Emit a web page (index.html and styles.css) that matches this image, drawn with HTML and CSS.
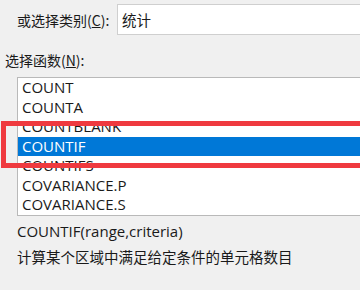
FILE: index.html
```html
<!DOCTYPE html>
<html lang="zh-CN">
<head>
  <meta charset="UTF-8" />
  <meta name="viewport" content="width=device-width, initial-scale=1.0"/>
  <title>插入函数</title>
  <link rel="stylesheet" href="styles.css">
</head>
<body>
  <div class="dialog">
    <div class="category-row">
      <label class="category-label">或选择类别(<u>C</u>):</label>
      <div class="combo">统计</div>
    </div>

    <div class="func-label">选择函数(<u>N</u>):</div>

    <ul class="func-list">
      <li>COUNT</li>
      <li>COUNTA</li>
      <li>COUNTBLANK</li>
      <li class="selected">COUNTIF</li>
      <li>COUNTIFS</li>
      <li>COVARIANCE.P</li>
      <li>COVARIANCE.S</li>
    </ul>

    <div class="syntax">COUNTIF(range,criteria)</div>
    <div class="desc">计算某个区域中满足给定条件的单元格数目</div>

    <div class="highlight-box"></div>
  </div>
</body>
</html>
```

FILE: styles.css
```css
* {
  box-sizing: border-box;
}

html, body {
  margin: 0;
  height: 100%;
  overflow: hidden;
}

body {
  background: #f0f0f0;
  font-family: "Open Sans", "Noto Sans CJK SC", sans-serif;
  font-size: 15px;
  color: #1a1a1a;
}

.dialog {
  position: relative;
  padding-top: 4px;
  width: 360px;
  height: 290px;
  overflow: hidden;
}

.category-row {
  display: flex;
  align-items: center;
  height: 31px;
}

.category-label {
  flex: none;
  width: 117px;
  padding-left: 17px;
  white-space: nowrap;
  font-size: 14px;
  font-family: "Noto Sans CJK SC", sans-serif;
}

.combo {
  flex: none;
  width: 320px;
  height: 31px;
  line-height: 29px;
  padding-left: 4px;
  background: #fff;
  border: 1px solid #cfcfcf;
  font-size: 14.5px;
  font-family: "Noto Sans CJK SC", sans-serif;
}

.func-label {
  padding: 14px 0 0 5px;
  height: 42px;
  line-height: 22px;
  white-space: nowrap;
  font-size: 14px;
  font-family: "Noto Sans CJK SC", sans-serif;
}

.func-list {
  list-style: none;
  margin: 0 0 0 17px;
  padding: 0;
  width: 420px;
  background: #fff;
  border: 1px solid #b9b9b9;
}

.func-list li {
  height: 19.5px;
  line-height: 19.5px;
  padding-left: 4px;
  white-space: nowrap;
}

.func-list .selected {
  background: #0078d7;
  color: #fff;
}

.syntax {
  margin-top: 5px;
  padding-left: 17px;
  line-height: 20px;
  white-space: nowrap;
}

.desc {
  margin-top: 6px;
  padding-left: 17px;
  line-height: 20px;
  white-space: nowrap;
  font-size: 14.5px;
  font-family: "Noto Sans CJK SC", sans-serif;
}

.highlight-box {
  position: absolute;
  left: 1px;
  top: 121px;
  width: 400px;
  height: 47px;
  border: 5px solid #ef3a3f;
}
```
